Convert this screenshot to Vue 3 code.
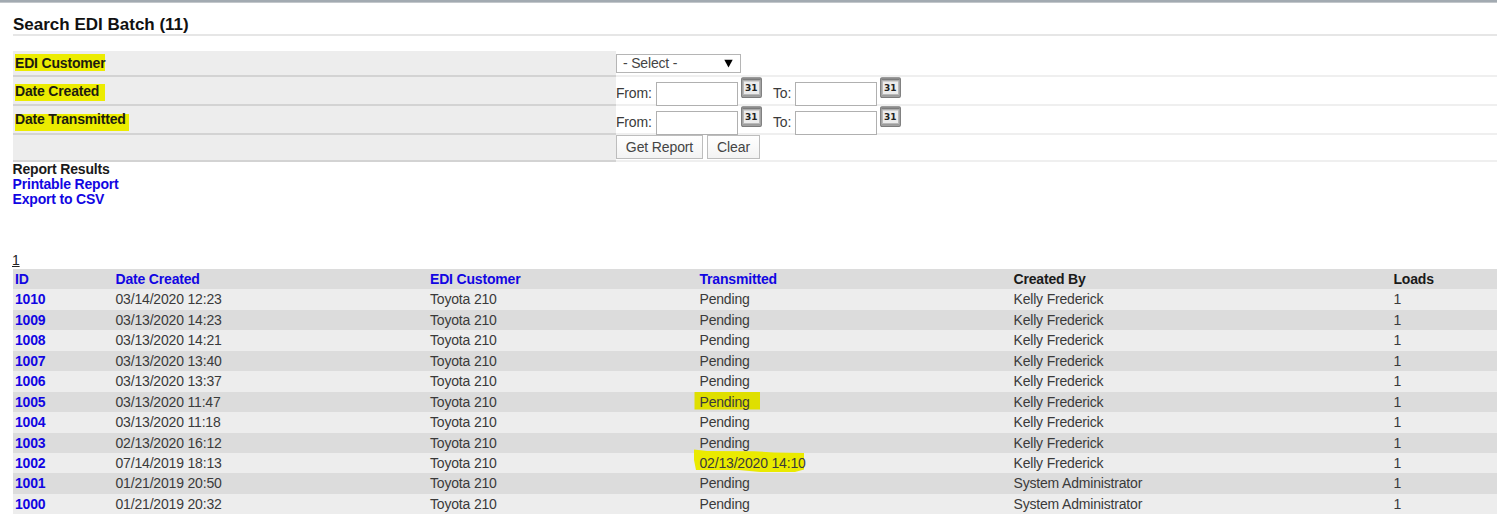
<script setup>
const rows = [
  ['1010', '03/14/2020 12:23', 'Pending', 'Kelly Frederick'],
  ['1009', '03/13/2020 14:23', 'Pending', 'Kelly Frederick'],
  ['1008', '03/13/2020 14:21', 'Pending', 'Kelly Frederick'],
  ['1007', '03/13/2020 13:40', 'Pending', 'Kelly Frederick'],
  ['1006', '03/13/2020 13:37', 'Pending', 'Kelly Frederick'],
  ['1005', '03/13/2020 11:47', 'Pending', 'Kelly Frederick'],
  ['1004', '03/13/2020 11:18', 'Pending', 'Kelly Frederick'],
  ['1003', '02/13/2020 16:12', 'Pending', 'Kelly Frederick'],
  ['1002', '07/14/2019 18:13', '02/13/2020 14:10', 'Kelly Frederick'],
  ['1001', '01/21/2019 20:50', 'Pending', 'System Administrator'],
  ['1000', '01/21/2019 20:32', 'Pending', 'System Administrator'],
]
const dates = [
  { label: 'Date Created', cls: 'created' },
  { label: 'Date Transmitted', cls: 'transmitted' },
]
</script>

<template>
  <main class="page">
    <div class="topbar"></div>
    <h1>Search EDI Batch (11)</h1>
    <section class="form">
      <div class="row customer">
        <div class="label"><span class="mark">EDI Customer</span></div>
        <div class="field">
          <div class="select"><span>- Select -</span>
            <svg width="9" height="9" viewBox="0 0 9 9"><path d="M0.3 0.8H8.7L4.5 8.4Z" fill="#000" /></svg>
          </div>
        </div>
      </div>
      <div v-for="d in dates" :key="d.label" class="row date" :class="d.cls">
        <div class="label"><span class="mark">{{ d.label }}</span></div>
        <div class="field">
          <template v-for="t in ['From:', 'To:']" :key="t">
            <span class="caption" :class="{ to: t === 'To:' }">{{ t }}</span>
            <input type="text" />
            <svg class="cal" width="21" height="21" viewBox="0 0 21 21">
              <rect x="0.7" y="0.9" width="19.6" height="19.4" rx="1.2" fill="#b9b9b9" stroke="#7c7c7c" stroke-width="1.3" />
              <path d="M1.5 2.4H19.5" stroke="#7c7c7c" stroke-width="1.6" />
              <rect x="3" y="4.5" width="15" height="12.5" fill="#ececec" />
              <path d="M2 18.8H19" stroke="#989898" stroke-width="1.4" />
              <text x="10.2" y="14.2" text-anchor="middle">31</text>
            </svg>
          </template>
        </div>
      </div>
      <div class="row actions">
        <div class="label"></div>
        <div class="field"><button class="get">Get Report</button><button class="clear">Clear</button></div>
      </div>
    </section>
    <section class="links">
      <div>Report Results</div>
      <a>Printable Report</a>
      <a>Export to CSV</a>
    </section>
    <div class="pager"><span>1</span></div>
    <section class="results">
      <div class="tr head">
        <a>ID</a><a>Date Created</a><a>EDI Customer</a><a>Transmitted</a><b>Created By</b><b>Loads</b>
      </div>
      <div v-for="r in rows" :key="r[0]" class="tr">
        <a>{{ r[0] }}</a>
        <span>{{ r[1] }}</span>
        <span>Toyota 210</span>
        <span class="status">
          <svg v-if="r[0] === '1005'" class="hl" width="67" height="20" viewBox="0 0 67 20"><path d="M0.5 0H66V17.5H0.5Z" fill="#dfdf00" /></svg>
          <svg v-if="r[0] === '1002'" class="hl wide" width="112" height="25" viewBox="0 0 112 25"><path d="M0 0.5L13 2L60 2.2L80 3.5L110 4V20.5L101 23H66L45 21L2 21L0 11Z" fill="#eaea00" /></svg>
          <i>{{ r[2] }}</i>
        </span>
        <span>{{ r[3] }}</span>
        <span>1</span>
      </div>
    </section>
  </main>
</template>

<style>
body { margin: 0; background: #fff; overflow: hidden; }
</style>

<style scoped>
* { box-sizing: border-box; }
.page { width: 1497px; height: 516px; overflow: hidden; background: #fff; font: 14px/15px "Liberation Sans", Arial, sans-serif; letter-spacing: -0.18px; color: #3a3a3a; }
.topbar { height: 3px; background: #a2aab1; border-bottom: 1px solid #c3c7cb; }
h1 { margin: 11px 0 0 13px; height: 22px; border-bottom: 2px solid #e6e6e6; font-size: 17px; letter-spacing: 0; line-height: 22px; color: #111; white-space: nowrap; }
.form { margin: 15px 0 0 13px; }
.row { display: flex; height: 29px; border-bottom: 2px solid #efefef; }
.row .label { width: 603px; flex: none; background: #ededed; height: 100%; box-shadow: 0 2px #d3d3d3; padding-left: 2px; font-weight: bold; color: #1c1c10; }
.field { display: flex; align-items: flex-start; flex: 1; }
.customer { height: 26px; }
.actions { height: 27px; }
.mark { display: block; width: 90px; height: 17px; margin-top: 3px; line-height: 18px; background: #ecec00; white-space: nowrap; }
.created .mark { margin-top: 7px; line-height: 14px; }
.transmitted .mark { width: 114px; margin-top: 8px; line-height: 11px; }
.select { display: flex; align-items: center; justify-content: space-between; width: 125px; height: 19px; margin-top: 3px; padding: 0 7px 0 6px; border: 1px solid #b5b5b5; color: #444; }
.caption { width: 39px; margin-top: 9px; }
.caption.to { width: 21px; margin-left: 11px; }
input { width: 82px; height: 24px; margin: 5px 3px 0 1px; padding: 2px; border: 1px solid #b0b0b0; background: #fff; }
.cal { flex: none; }
.cal text { font: bold 9px "DejaVu Sans", sans-serif; letter-spacing: 0; fill: #222; }
button { height: 24px; margin: 0 4px 0 0; padding: 0; border: 1px solid #bdbdbd; background: linear-gradient(#fff, #f3f3f3); font: 14px/22px "Liberation Sans", Arial, sans-serif; letter-spacing: -0.12px; color: #444; }
.get { width: 87px; }
.clear { width: 53px; }
.links { margin-left: 12.5px; line-height: 15px; font-weight: bold; color: #1a1a1a; }
.links a { display: block; }
a { color: #1206e2; font-weight: bold; }
.pager { margin: 46px 0 0 12px; height: 16px; color: #222; }
.pager span { text-decoration: underline; }
.results { margin-left: 13px; }
.tr { display: grid; grid-template-columns: 100.5px 314.5px 269.5px 314px 380px 1fr; padding-left: 2px; height: 20.44px; line-height: 20px; background: #ededed; white-space: nowrap; }
.tr:nth-child(odd) { background: #dcdcdc; }
b { color: #1a1a1a; }
.status { position: relative; }
i { position: relative; font-style: normal; }
.hl { position: absolute; left: -6px; top: 0; }
.hl.wide { top: -4px; }
</style>
